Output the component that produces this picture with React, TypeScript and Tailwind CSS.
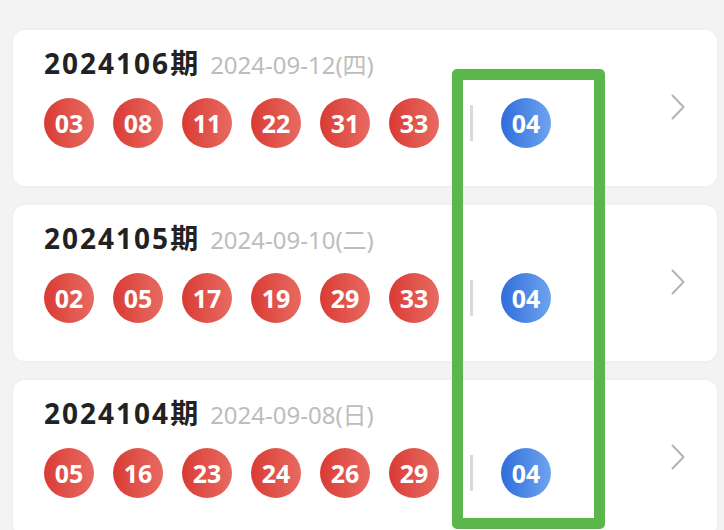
type Draw = {
  issue: string;
  date: string;
  reds: string[];
  blue: string;
};

const draws: Draw[] = [
  { issue: '2024106', date: '2024-09-12(四)', reds: ['03', '08', '11', '22', '31', '33'], blue: '04' },
  { issue: '2024105', date: '2024-09-10(二)', reds: ['02', '05', '17', '19', '29', '33'], blue: '04' },
  { issue: '2024104', date: '2024-09-08(日)', reds: ['05', '16', '23', '24', '26', '29'], blue: '04' },
];

const font = { fontFamily: '"Noto Sans", "Noto Sans CJK SC", sans-serif' };

const Ball: React.FC<{ num: string; blue?: boolean }> = ({ num, blue }) => (
  <div
    className={`w-[50px] h-[50px] rounded-full flex items-center justify-center text-white text-[25px] font-bold leading-none shrink-0 ${
      blue
        ? 'bg-linear-to-r from-[#2f6ddb] to-[#6ea4ef]'
        : 'bg-linear-to-r from-[#d93a33] to-[#e76a62]'
    }`}
  >
    {num}
  </div>
);

const DrawCard: React.FC<{ draw: Draw }> = ({ draw }) => (
  <div className="h-[156px] shrink-0 bg-white rounded-xl flex items-center pl-[31px] pr-[32px] shadow-[0_0_4px_rgba(0,0,0,0.04)]">
    <div className="flex-1 flex flex-col self-start pt-[16px]">
      <div className="flex items-baseline">
        <span className="text-[28px] leading-[34px] font-bold text-[#222] tracking-[2px]">
          {draw.issue}期
        </span>
        <span className="text-[24px] leading-[34px] text-[#bdbdbd] ml-[10px]">{draw.date}</span>
      </div>
      <div className="flex items-center mt-[16px]">
        <div className="flex gap-[19px]">
          {draw.reds.map((n, i) => (
            <Ball key={i} num={n} />
          ))}
        </div>
        <div className="w-[3px] h-[36px] bg-[#dadada] ml-[31px] mr-[28px]" />
        <Ball num={draw.blue} blue />
      </div>
    </div>
    {/* arrow */}
    <svg width="14" height="26" viewBox="0 0 14 26" fill="none" className="mb-[2px]">
      <polyline points="1.5,1.5 12.5,13 1.5,24.5" stroke="#b3b3b3" strokeWidth="2" strokeLinecap="round" strokeLinejoin="round" />
    </svg>
  </div>
);

export default function App() {
  return (
    <div className="relative w-[724px] h-[530px] overflow-hidden bg-[#f3f3f3]" style={font}>
      <div className="flex flex-col gap-[19px] pt-[30px] pl-[13px] pr-[7px]">
        {draws.map((d) => (
          <DrawCard key={d.issue} draw={d} />
        ))}
      </div>
      <div className="absolute left-[452px] top-[69px] w-[153px] h-[460px] border-[11px] border-[#5bb64b] rounded-[5px]" />
    </div>
  );
}
